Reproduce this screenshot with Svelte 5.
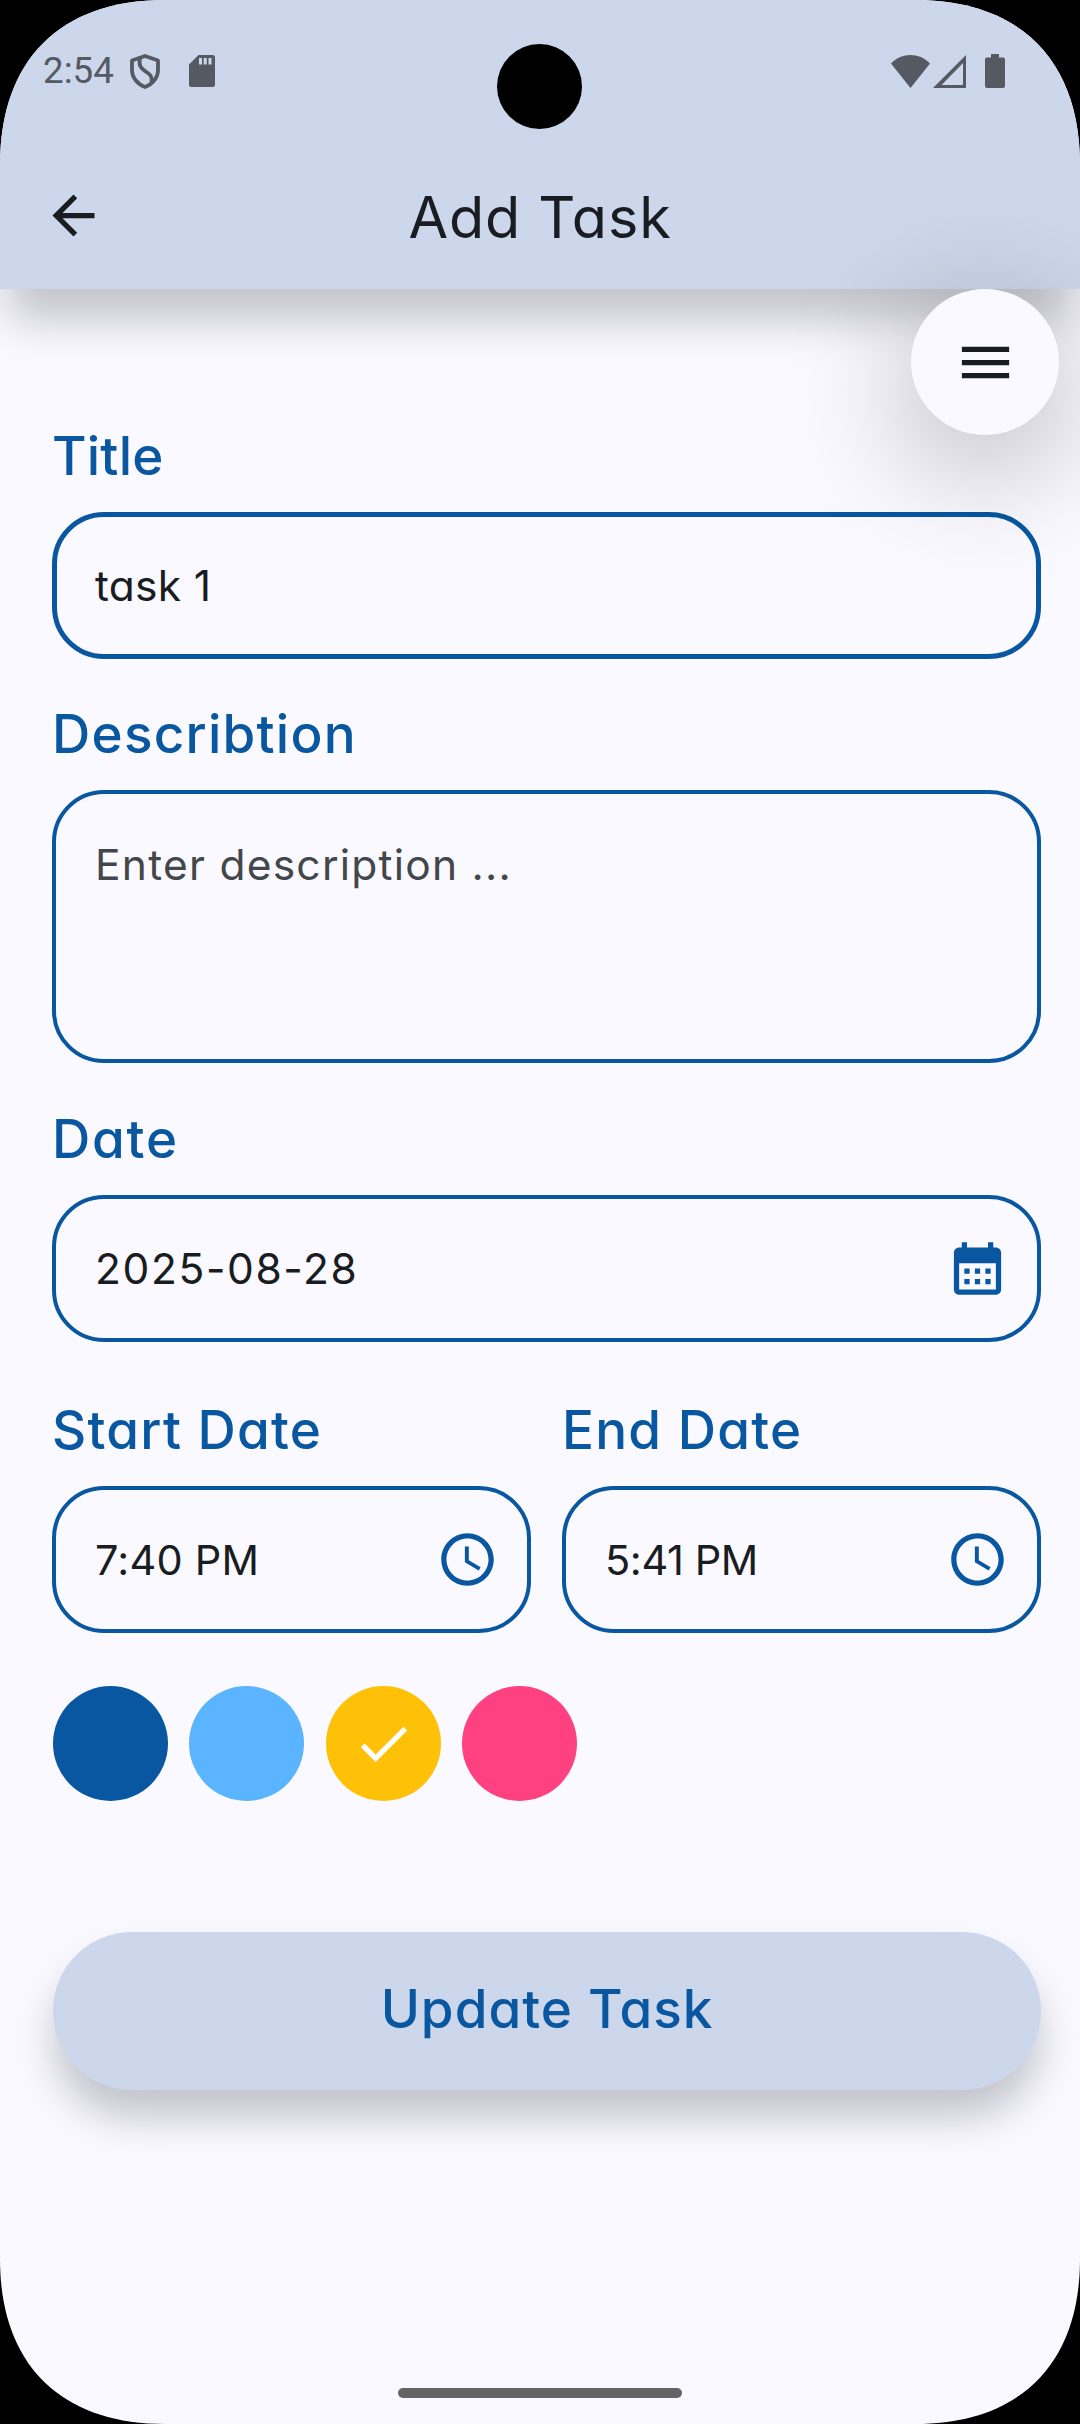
<script>
  const icons = {
    calendar:
      'M19 4h-1V2h-2v2H8V2H6v2H5c-1.11 0-1.99.9-1.99 2L3 20a2 2 0 0 0 2 2h14c1.1 0 2-.9 2-2V6c0-1.1-.9-2-2-2zm0 16H5V10h14v10zM9 14H7v-2h2v2zm4 0h-2v-2h2v2zm4 0h-2v-2h2v2zm-8 4H7v-2h2v2zm4 0h-2v-2h2v2zm4 0h-2v-2h2v2z',
    clock:
      'M11.99 2C6.47 2 2 6.48 2 12s4.47 10 9.99 10C17.52 22 22 17.52 22 12S17.52 2 11.99 2zM12 20c-4.42 0-8-3.58-8-8s3.58-8 8-8 8 3.58 8 8-3.58 8-8 8zm.5-13H11v6l5.25 3.15.75-1.23-4.5-2.67z',
    back: 'M20 11H7.83l5.59-5.59L12 4l-8 8 8 8 1.41-1.41L7.83 13H20v-2z',
    menu: 'M3 18h18v-2H3v2zm0-5h18v-2H3v2zm0-7v2h18V6H3z',
    check: 'M9 16.2L4.8 12l-1.4 1.4L9 19 21 7l-1.4-1.4z'
  };
  const swatches = ['navy', 'sky', 'amber', 'pink'];
  let selected = $state('amber');
</script>

{#snippet icon(name)}
  <svg class="icon" viewBox="0 0 24 24" aria-hidden="true"><path d={icons[name]} /></svg>
{/snippet}

{#snippet field(label, value, kind, iconName)}
  <div class="field">
    <div class="label"><span class={kind + '-label'}>{label}</span></div>
    <div class="box {kind}">
      <span class="value">{value}</span>
      {#if iconName}{@render icon(iconName)}{/if}
    </div>
  </div>
{/snippet}

<div class="phone">
  <header>
    <div class="status">
      <span class="time">2:54</span>
      <svg class="shield" viewBox="0 0 30 35" aria-hidden="true">
        <path d="M15 2 28 6.500V16C28 24 22 30.500 15 33 8 30.500 2 24 2 16V6.500Z" />
        <path d="M10 4C8.500 11 10.500 14 15 17C20.500 20.500 22.500 22.500 21.500 28.500" />
      </svg>
      <svg class="sd" viewBox="0 0 26 32" aria-hidden="true">
        <path fill-rule="evenodd" d="M9.500 0H23.500Q26 0 26 2.500V29.500Q26 32 23.500 32H2.500Q0 32 0 29.500V9.500ZM10 3V9.500H13V3ZM14.700 3V9.500H17.700V3ZM19.500 3V9.500H22.500V3Z" />
      </svg>
      <span class="spacer"></span>
      <svg class="wifi" viewBox="0 0 39 33" aria-hidden="true"><path d="M0 8.500C11 -2.800 28 -2.800 39 8.500L19.500 33Z" /></svg>
      <svg class="signal" viewBox="0 0 33 33" aria-hidden="true"><path fill-rule="evenodd" d="M33 0V33H0ZM30 8V30H8.500Z" /></svg>
      <svg class="battery" viewBox="0 0 20 34" aria-hidden="true"><path d="M6 0H14V3.500H18Q20 3.500 20 5.500V32Q20 34 18 34H2Q0 34 0 32V5.500Q0 3.500 2 3.500H6Z" /></svg>
    </div>
    <div class="toolbar">
      {@render icon('back')}
      <h1>Add Task</h1>
    </div>
    <span class="camera"></span>
  </header>

  <button class="fab" aria-label="Menu">{@render icon('menu')}</button>

  <main>
    {@render field('Title', 'task 1', 'title', null)}
    {@render field('Describtion', 'Enter description ...', 'description', null)}
    {@render field('Date', '2025-08-28', 'date', 'calendar')}
    <div class="row">
      {@render field('Start Date', '7:40 PM', 'start', 'clock')}
      {@render field('End Date', '5:41 PM', 'end', 'clock')}
    </div>
    <div class="swatches">
      {#each swatches as s}
        <button class="swatch {s}" aria-label={s} onclick={() => (selected = s)}>
          {#if selected === s}{@render icon('check')}{/if}
        </button>
      {/each}
    </div>
    <button class="submit"><span>Update Task</span></button>
  </main>

  <div class="home"></div>
</div>

<style>
  :global(body) {
    background: #000;
  }
  .phone {
    position: relative;
    display: flex;
    flex-direction: column;
    width: 1080px;
    height: 2424px;
    overflow: hidden;
    background: #faf9ff;
    font-family: Inter, 'Liberation Sans', sans-serif;
    font-feature-settings: 'cv11';
    color: #191c20;
    clip-path: path('M165 0H915C1020 0 1080 60 1080 165V2259C1080 2364 1020 2424 915 2424H165C60 2424 0 2364 0 2259V165C0 60 60 0 165 0Z');
  }
  button {
    border: 0;
    padding: 0;
    font: inherit;
    font-feature-settings: inherit;
  }
  .icon {
    display: block;
    flex: none;
    width: 63px;
    height: 63px;
    fill: currentColor;
  }
  header {
    position: relative;
    flex: none;
    height: 289px;
    background: #ccd7eb;
    box-shadow: 0 38px 42px -9px rgba(0, 12, 24, 0.23);
  }
  .status {
    display: flex;
    align-items: center;
    height: 142px;
    box-sizing: border-box;
    padding: 0 75px 0 43px;
    color: #545962;
  }
  .status svg {
    flex: none;
    fill: currentColor;
  }
  .time {
    width: 87px;
    font: 400 36.75px/44px Roboto, sans-serif;
  }
  .status .shield {
    width: 30px;
    height: 35px;
    fill: none;
    stroke: currentColor;
    stroke-width: 3.8;
    stroke-linejoin: round;
  }
  .sd {
    width: 26px;
    height: 32px;
    margin-left: 29px;
  }
  .spacer {
    flex: 1;
  }
  .wifi {
    width: 39px;
    height: 33px;
  }
  .signal {
    width: 33px;
    height: 33px;
    margin-left: 3px;
  }
  .battery {
    width: 20px;
    height: 34px;
    margin-left: 19px;
  }
  .toolbar {
    display: grid;
    grid-template-columns: 63px 1fr 63px;
    align-items: center;
    height: 147px;
    padding: 0 42px;
  }
  h1 {
    margin: 0;
    padding-top: 2px;
    text-align: center;
    font-size: 57.5px;
    line-height: 70px;
    font-weight: 400;
    letter-spacing: 0.9px;
  }
  .camera {
    position: absolute;
    left: 497px;
    top: 44px;
    width: 85px;
    height: 85px;
    border-radius: 50%;
    background: #000;
  }
  .fab {
    position: absolute;
    left: 911px;
    top: 289px;
    display: grid;
    place-items: center;
    width: 148px;
    height: 146px;
    border-radius: 50%;
    background: #faf9ff;
    color: #191c20;
    box-shadow: 0 28px 125px 4px rgba(0, 0, 0, 0.28);
  }
  main {
    display: flex;
    flex-direction: column;
    padding: 138px 39px 0 52px;
  }
  .field {
    display: flex;
    flex-direction: column;
    gap: 25px;
    margin-bottom: 46px;
  }
  .field:nth-child(2) {
    margin-bottom: 47px;
  }
  .field:nth-child(3) {
    margin-bottom: 59px;
  }
  .label {
    height: 60px;
    font-size: 53px;
    line-height: 58px;
    font-weight: 500;
    letter-spacing: 1.25px;
    color: #0857a0;
    white-space: nowrap;
  }
  .title-label {
    letter-spacing: 0.2px;
  }
  .date-label {
    letter-spacing: 1.8px;
  }
  .box {
    display: flex;
    align-items: center;
    justify-content: space-between;
    box-sizing: border-box;
    height: 147px;
    padding: 0 28px 0 39px;
    border: 4px solid #0857a0;
    border-radius: 52px;
    font-size: 42.5px;
    line-height: 60px;
    white-space: nowrap;
  }
  .box .icon {
    color: #0857a0;
  }
  .title {
    border-width: 5px;
    padding-left: 38px;
    letter-spacing: 0.3px;
  }
  .description {
    align-items: flex-start;
    height: 273px;
    padding-top: 41px;
    color: #43474a;
    letter-spacing: 1.25px;
  }
  .date {
    letter-spacing: 1.6px;
  }
  .start {
    font-size: 41.5px;
    letter-spacing: 0.2px;
  }
  .end {
    font-size: 41.5px;
    letter-spacing: -0.4px;
  }
  .row {
    display: grid;
    grid-template-columns: 1fr 1fr;
    gap: 31px;
  }
  .row .field {
    margin: 0;
  }
  .swatches {
    display: flex;
    gap: 21.300px;
    margin: 53px 0 131px 1px;
  }
  .swatch {
    display: grid;
    place-items: center;
    width: 115px;
    height: 115px;
    border-radius: 50%;
    color: #fff;
  }
  .navy { background: #0857a0; }
  .sky { background: #5bb4ff; }
  .amber { background: #ffc107; }
  .pink { background: #ff4081; }
  .submit {
    height: 158px;
    margin-left: 1px;
    padding-bottom: 4px;
    border-radius: 79px;
    background: #ccd7eb;
    color: #0857a0;
    font-size: 53px;
    line-height: 60px;
    font-weight: 500;
    letter-spacing: 1px;
    box-shadow: 0 28px 42px -2px rgba(0, 12, 24, 0.23);
  }
  .home {
    width: 284px;
    height: 10px;
    margin: auto auto 26px;
    border-radius: 5px;
    background: #646466;
  }
</style>
